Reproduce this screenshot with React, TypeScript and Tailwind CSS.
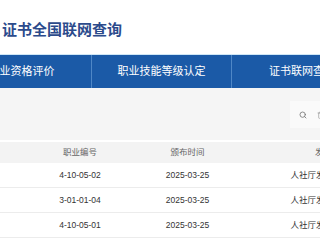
import { Search, Trash2 } from "lucide-react";

const rows = [
  { code: "4-10-05-02", date: "2025-03-25", doc: "人社厅发〔2025〕9号" },
  { code: "3-01-01-04", date: "2025-03-25", doc: "人社厅发〔2025〕9号" },
  { code: "4-10-05-01", date: "2025-03-25", doc: "人社厅发〔2025〕9号" },
  { code: "4-10-05-03", date: "2025-03-25", doc: "人社厅发〔2025〕9号" },
];

const navItems = ["职业资格评价", "职业技能等级认定", "证书联网查询"];

export default function App() {
  return (
    <div className="w-[320px] h-[240px] overflow-hidden bg-white font-['Liberation_Sans','Noto_Sans_CJK_SC',sans-serif]">
      <div className="h-[54px] flex items-center pt-[2px]">
        <h1 className="ml-[2px] text-[15px] leading-none font-bold text-[#2c4b8c] font-['Noto_Sans_CJK_SC',sans-serif] whitespace-nowrap">
          证书全国联网查询
        </h1>
      </div>
      <div className="h-px bg-[#cfe7f6]" />
      <nav className="h-[33px] bg-[#1b5aa7] flex ml-[-48px]">
        {navItems.map((item, i) => (
          <div
            key={item}
            className={
              "w-[140px] shrink-0 flex items-center justify-center text-white text-[11px] " +
              (i < navItems.length - 1 ? "border-r border-[#4f87c6]" : "")
            }
          >
            {item}
          </div>
        ))}
      </nav>
      <div className="h-[52px] bg-[#f5f5f5] flex items-center justify-end overflow-hidden">
        <div className="w-[40px] h-[27px] mr-[-10px] bg-[#fafafa] flex items-center gap-[10px] pl-[9px] shrink-0 mt-[1px]">
          <Search size={8} strokeWidth={2.5} className="text-[#777] shrink-0" />
          <Trash2 size={8} strokeWidth={2} className="text-[#999] shrink-0" />
        </div>
      </div>
      <div className="h-[2px] bg-white" />
      <div className="flex h-[21px] bg-[#f3f3f3] text-[8.5px] text-[#666] items-center">
        <div className="w-[26px] shrink-0" />
        <div className="w-[108px] shrink-0 text-center">职业编号</div>
        <div className="w-[107px] shrink-0 text-center">颁布时间</div>
        <div className="w-[182px] shrink-0 text-center">发文字号</div>
      </div>
      {rows.map((r, i) => (
        <div
          key={i}
          className="flex h-[25px] items-center border-b border-[#ececec] text-[8.5px] text-[#333]"
        >
          <div className="w-[26px] shrink-0" />
          <div className="w-[108px] shrink-0 text-center">{r.code}</div>
          <div className="w-[107px] shrink-0 text-center">{r.date}</div>
          <div className="w-[182px] shrink-0 text-center whitespace-nowrap">{r.doc}</div>
        </div>
      ))}
    </div>
  );
}
